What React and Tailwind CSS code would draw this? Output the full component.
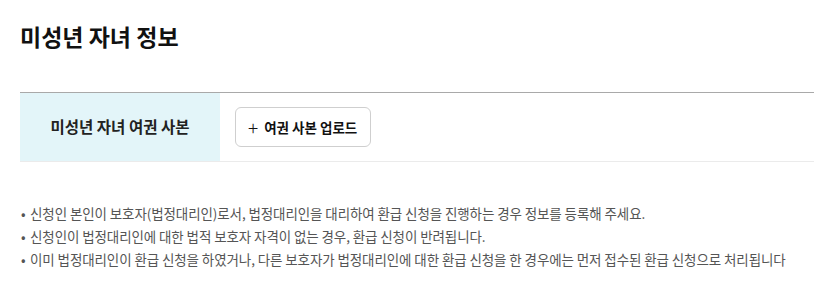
const NOTES = [
  '신청인 본인이 보호자(법정대리인)로서, 법정대리인을 대리하여 환급 신청을 진행하는 경우 정보를 등록해 주세요.',
  '신청인이 법정대리인에 대한 법적 보호자 자격이 없는 경우, 환급 신청이 반려됩니다.',
  '이미 법정대리인이 환급 신청을 하였거나, 다른 보호자가 법정대리인에 대한 환급 신청을 한 경우에는 먼저 접수된 환급 신청으로 처리됩니다',
];

export default function App() {
  return (
    <div className="w-[814px] h-[281px] bg-white pl-5 pt-[21px] font-['Noto_Sans_CJK_KR',sans-serif] overflow-hidden">
      {/* Section title */}
      <h2 className="text-[23px] leading-[30px] font-bold text-[#111]">미성년 자녀 정보</h2>

      {/* Form row */}
      <div className="mt-[41px] flex border-t border-[#a9a9a9] border-b border-b-[#ebebeb]">
        <div className="w-[200px] h-[68px] bg-[#e3f5f9] flex items-center justify-center text-[15.5px] font-bold text-[#222]">
          미성년 자녀 여권 사본
        </div>
        <div className="flex-1 flex items-center pl-[15px]">
          <button className="h-[40px] pl-[12px] pr-[13px] border border-[#cfcfcf] rounded-[6px] bg-white flex items-center gap-[6px] text-[13.5px] text-[#111]">
            <span className="text-[19px] font-light leading-none -mt-[2px]">+</span>
            <span className="font-bold">여권 사본 업로드</span>
          </button>
        </div>
      </div>

      {/* Notes */}
      <ul className="mt-[40px] text-[13.5px] leading-[23px] text-[#555] tracking-[-0.1px]">
        {NOTES.map((t, i) => (
          <li key={i} className="flex">
            <span className="w-[10px] shrink-0 pl-[1px]">•</span>
            <span>{t}</span>
          </li>
        ))}
      </ul>
    </div>
  );
}
